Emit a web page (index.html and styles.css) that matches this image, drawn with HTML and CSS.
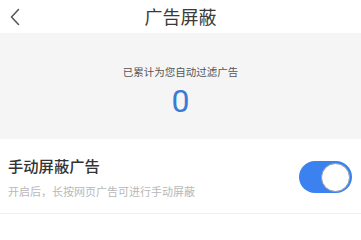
FILE: index.html
```html
<!DOCTYPE html>
<html lang="zh-CN">
<head>
<meta charset="utf-8">
<link rel="stylesheet" href="styles.css">
</head>
<body>
<div class="page">
  <header class="header">
    <div class="back">
      <svg width="12" height="18" viewBox="0 0 12 18"><path d="M9.5 1.5 L2.5 9 L9.5 16.5" fill="none" stroke="#5a5a5a" stroke-width="1.6" stroke-linecap="round" stroke-linejoin="round"/></svg>
    </div>
    <h1 class="title">广告屏蔽</h1>
    <div></div>
  </header>
  <section class="stats">
    <p class="stats-label">已累计为您自动过滤广告</p>
    <p class="stats-count">0</p>
  </section>
  <section class="setting">
    <div class="setting-text">
      <p class="setting-title">手动屏蔽广告</p>
      <p class="setting-desc">开启后，长按网页广告可进行手动屏蔽</p>
    </div>
    <div class="switch"><div class="knob"></div></div>
  </section>
  <div class="divider"></div>
</div>
</body>
</html>
```

FILE: styles.css
```css
* { box-sizing: border-box; }
html, body { margin: 0; padding: 0; background: #fff; }
body { font-family: "Noto Sans CJK SC", "Noto Sans", Roboto, sans-serif; color: #333; }
p, h1 { margin: 0; }
.page { width: 361px; height: 227px; display: flex; flex-direction: column; }
.header {
  height: 33px;
  display: grid;
  grid-template-columns: 1fr auto 1fr;
  align-items: center;
}
.back { padding-left: 9px; display: flex; align-items: center; height: 100%; }
.title { font-size: 18px; font-weight: 400; color: #3a3a3a; line-height: 30px; padding-bottom: 2px; }
.stats {
  height: 106px;
  background: #f5f5f5;
  display: flex;
  flex-direction: column;
  align-items: center;
  padding-top: 31px;
}
.stats-label { font-size: 10.5px; color: #555; line-height: 16px; }
.stats-count {
  font-family: Roboto, "Noto Sans", sans-serif;
  font-weight: 400;
  font-size: 32px;
  line-height: 36px;
  color: #3a7bd5;
  margin-top: 3px;
}
.setting {
  height: 74px;
  display: flex;
  align-items: center;
  justify-content: space-between;
  padding: 0 9px 0 8px;
}
.setting-text { display: flex; flex-direction: column; }
.setting-title { font-size: 15.3px; line-height: 20px; color: #333; font-weight: 500; }
.setting-desc { font-size: 11px; line-height: 14px; color: #b8b8b8; margin-top: 9px; }
.switch {
  width: 53px;
  height: 32px;
  border-radius: 16px;
  background: #3b82f0;
  display: flex;
  align-items: center;
  justify-content: flex-end;
  padding-right: 2px;
  margin-top: 2px;
}
.knob {
  width: 29px;
  height: 29px;
  border-radius: 50%;
  background: #fff;
  border: 1.5px solid #8b98a6;
}
.divider { height: 1px; background: #f0f0f0; }
```
